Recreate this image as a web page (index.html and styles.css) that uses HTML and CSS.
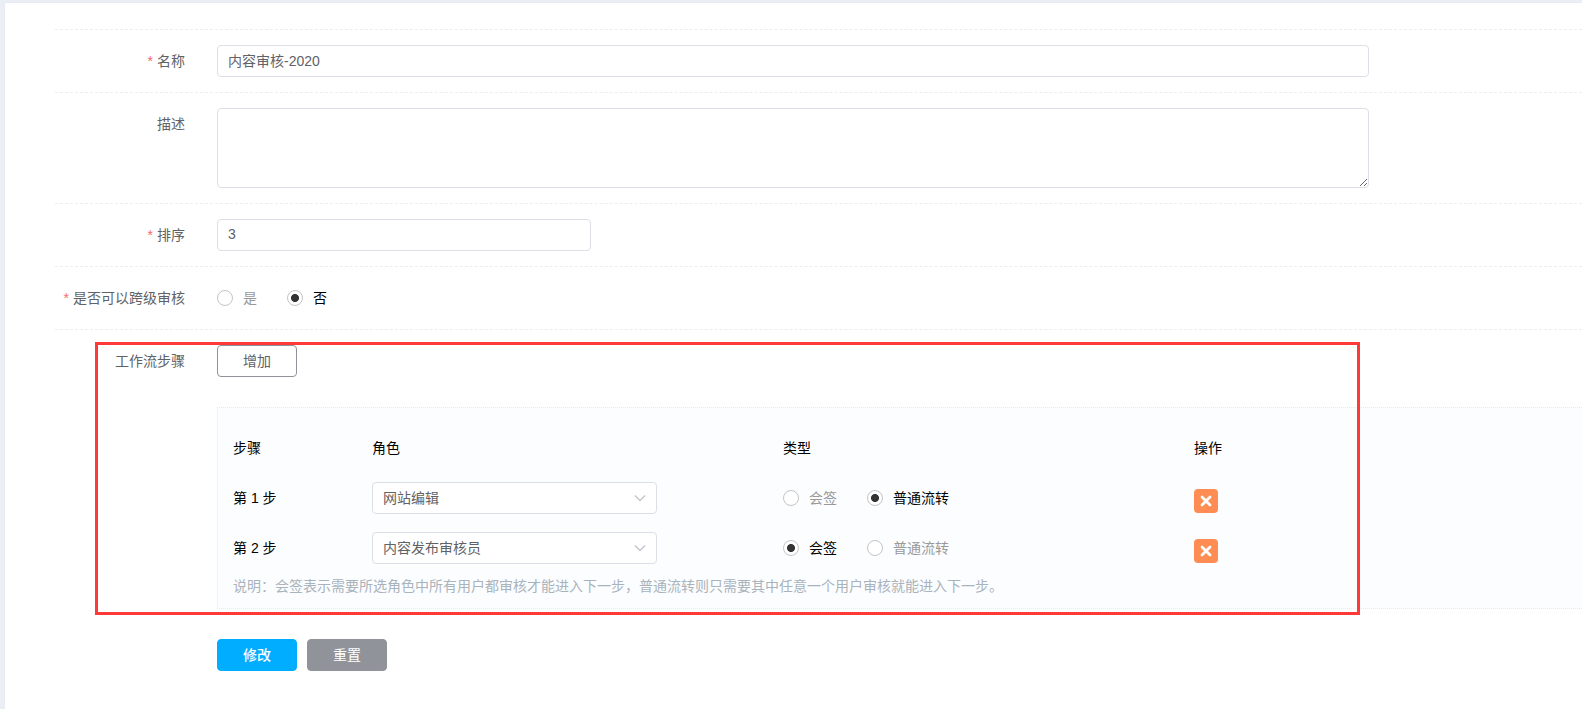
FILE: index.html
```html
<!DOCTYPE html>
<html lang="zh-CN">

<head>
    <meta charset="UTF-8">
    <meta name="viewport" content="width=device-width, initial-scale=1.0">
    <title>工作流</title>
    <link rel="stylesheet" href="styles.css">
</head>

<body>

    <main class="panel">
        <form class="form">
            <div class="form-item">
                <label class="form-label required" for="name">名称</label>
                <div class="form-content">
                    <input class="input" type="text" id="name" value="内容审核-2020">
                </div>
            </div>

            <div class="form-item">
                <label class="form-label" for="desc">描述</label>
                <div class="form-content">
                    <textarea class="input textarea" id="desc"></textarea>
                </div>
            </div>

            <div class="form-item">
                <label class="form-label required" for="sort">排序</label>
                <div class="form-content">
                    <input class="input input-short" type="text" id="sort" value="3">
                </div>
            </div>

            <div class="form-item">
                <span class="form-label required" id="cross-label">是否可以跨级审核</span>
                <div class="form-content radio-group" role="radiogroup" aria-labelledby="cross-label">
                    <label class="radio"><input type="radio" name="cross" value="1"><span>是</span></label>
                    <label class="radio"><input type="radio" name="cross" value="0" checked><span>否</span></label>
                </div>
            </div>

            <div class="form-item form-item-steps">
                <span class="form-label">工作流步骤</span>
                <div class="form-content">
                    <button class="btn" type="button">增加</button>

                    <div class="steps">
                        <div class="steps-row">
                            <span>步骤</span>
                            <span>角色</span>
                            <span>类型</span>
                            <span>操作</span>
                        </div>
                        <div class="steps-row">
                            <label for="role1">第 1 步</label>
                            <div class="select">
                                <select class="input" id="role1">
                                    <option>网站编辑</option>
                                    <option>内容发布审核员</option>
                                </select>
                                <svg class="select-arrow" viewBox="0 0 12 8"><path d="M1 1.5l5 5 5-5"/></svg>
                            </div>
                            <div class="radio-group">
                                <label class="radio"><input type="radio" name="type1"><span>会签</span></label>
                                <label class="radio"><input type="radio" name="type1" checked><span>普通流转</span></label>
                            </div>
                            <div class="steps-action">
                                <button class="btn-delete" type="button" aria-label="删除">
                                    <svg viewBox="0 0 12 12"><path d="M2 2l8 8M10 2l-8 8"/></svg>
                                </button>
                            </div>
                        </div>
                        <div class="steps-row">
                            <label for="role2">第 2 步</label>
                            <div class="select">
                                <select class="input" id="role2">
                                    <option>网站编辑</option>
                                    <option selected>内容发布审核员</option>
                                </select>
                                <svg class="select-arrow" viewBox="0 0 12 8"><path d="M1 1.5l5 5 5-5"/></svg>
                            </div>
                            <div class="radio-group">
                                <label class="radio"><input type="radio" name="type2" checked><span>会签</span></label>
                                <label class="radio"><input type="radio" name="type2"><span>普通流转</span></label>
                            </div>
                            <div class="steps-action">
                                <button class="btn-delete" type="button" aria-label="删除">
                                    <svg viewBox="0 0 12 12"><path d="M2 2l8 8M10 2l-8 8"/></svg>
                                </button>
                            </div>
                        </div>
                        <p class="steps-note">说明：会签表示需要所选角色中所有用户都审核才能进入下一步，普通流转则只需要其中任意一个用户审核就能进入下一步。</p>
                    </div>
                </div>
                <div class="highlight"></div>
            </div>

            <div class="form-footer">
                <button class="btn btn-primary" type="button">修改</button>
                <button class="btn btn-info" type="reset">重置</button>
            </div>
        </form>
    </main>

</body>

</html>
```

FILE: styles.css
```css
* {
    box-sizing: border-box;
}

body {
    margin: 0;
    padding: 2px 0 0 4px;
    background-color: #ebeff5;
    color: #000;
    font-family: "Liberation Sans", "Noto Sans CJK SC", sans-serif;
    font-size: 14px;
    line-height: 32px;
}

input,
select,
textarea,
button {
    font-family: inherit;
    font-size: 14px;
}

.panel {
    min-height: calc(100vh - 2px);
    padding: 26px 0 38px 50px;
    border-top: 1px solid #e6ebf5;
    border-left: 1px solid #e6ebf5;
    background-color: #fff;
}

.form-item {
    display: flex;
    padding: 15px 0;
    border-top: 1px dashed #ebeef0;
}

.form-label {
    flex: none;
    width: 162px;
    padding-right: 32px;
    color: #606266;
    text-align: right;
}

.required::before {
    content: "*";
    margin-right: 4px;
    color: #f56c6c;
}

.form-content {
    flex: 1;
    min-width: 0;
}

/* inputs */
.input {
    display: block;
    width: 100%;
    max-width: 1152px;
    height: 32px;
    margin: 0;
    padding: 0 10px 2px;
    border: 1px solid #dcdfe6;
    border-radius: 4px;
    background-color: #fff;
    color: #606266;
}

.input-short {
    max-width: 374px;
}

.textarea {
    height: 80px;
    padding: 5px 10px;
    resize: vertical;
}

.select {
    position: relative;
    width: 285px;
}

.select .input {
    padding-bottom: 0;
    appearance: none;
}

.select-arrow {
    position: absolute;
    top: 12px;
    right: 11px;
    width: 12px;
    height: 8px;
    fill: none;
    stroke: #c0c4cc;
    stroke-width: 1.3;
    pointer-events: none;
}

/* radios */
.radio-group {
    display: flex;
    gap: 30px;
}

.radio {
    display: flex;
    align-items: center;
    gap: 10px;
    color: #999;
}

.radio:has(input:checked) {
    color: #000;
}

.radio input {
    appearance: none;
    width: 16px;
    height: 16px;
    margin: 0;
    border: 1px solid #c4c4c4;
    border-radius: 50%;
    background-color: #fff;
}

.radio input:checked {
    background-image: radial-gradient(circle, #333 3.6px, transparent 4.4px);
}

/* buttons */
.btn {
    display: block;
    width: 80px;
    height: 32px;
    padding: 0 0 2px;
    border: 1px solid #909399;
    border-radius: 4px;
    background-color: #fff;
    color: #606266;
}

.btn-primary {
    border-color: #00adff;
    background-color: #00adff;
    color: #fff;
    font-weight: 500;
}

.btn-info {
    background-color: #909399;
    color: #fff;
}

.btn-delete {
    display: flex;
    align-items: center;
    justify-content: center;
    width: 24px;
    height: 24px;
    padding: 0;
    border: 0;
    border-radius: 4px;
    background-color: #ff8c52;
}

.btn-delete svg {
    width: 12px;
    height: 12px;
    stroke: #fff;
    stroke-width: 2.8;
    stroke-linecap: round;
}

/* workflow steps */
.form-item-steps {
    position: relative;
    padding-bottom: 0;
}

.steps {
    margin-top: 30px;
    padding: 15px 0 12px 15px;
    border: 1px dotted #e6e9ee;
    border-right: 0;
    background-color: #fcfdff;
}

.steps-row {
    display: grid;
    grid-template-columns: 139fr 411fr 411fr 388fr;
    align-items: center;
    height: 50px;
}

.steps-action {
    padding-top: 6px;
}

.steps-note {
    margin: 3px 0 0;
    color: #a9b3bb;
    line-height: 20px;
}

.highlight {
    position: absolute;
    top: 12px;
    right: 222px;
    bottom: -6px;
    left: 40px;
    border: 3px solid #ff3838;
    pointer-events: none;
}

.form-footer {
    display: flex;
    gap: 10px;
    padding: 30px 0 0 162px;
}
```
